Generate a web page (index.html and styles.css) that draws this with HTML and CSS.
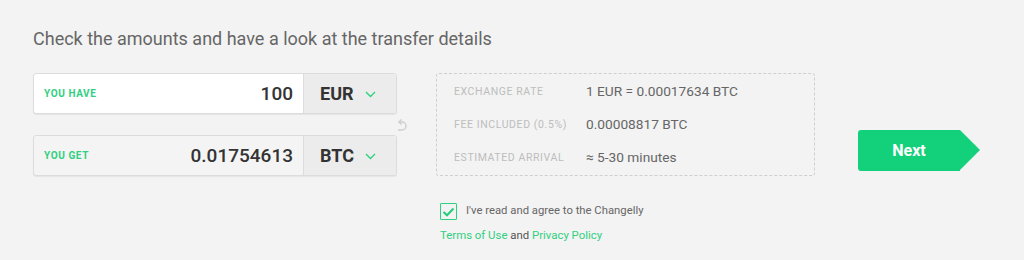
FILE: index.html
```html
<!DOCTYPE html>
<html>
<head>
<meta charset="utf-8">
<link rel="stylesheet" href="styles.css">
</head>
<body>
<div class="page">
  <h1 class="title">Check the amounts and have a look at the transfer details</h1>
  <div class="main">
    <div class="amounts">
      <div class="field field-have">
        <div class="field-body">
          <span class="field-label">YOU HAVE</span>
          <span class="field-value">100</span>
        </div>
        <div class="currency">
          <span class="currency-code">EUR</span>
          <svg class="chev" width="11" height="7" viewBox="0 0 11 7"><path d="M1 1 L5.5 5.5 L10 1" fill="none" stroke="#2fd07f" stroke-width="1.4"/></svg>
        </div>
      </div>
      <div class="swap-row">
        <svg class="swap" width="10" height="14" viewBox="0 0 10 14"><path d="M3 3 H5 A4 4 0 0 1 5 11 H1" fill="none" stroke="#cfcfcf" stroke-width="1.5"/><path d="M4.5 0.5 L2 3 L4.5 5.5" fill="none" stroke="#cfcfcf" stroke-width="1.5"/></svg>
      </div>
      <div class="field field-get">
        <div class="field-body">
          <span class="field-label">YOU GET</span>
          <span class="field-value">0.01754613</span>
        </div>
        <div class="currency">
          <span class="currency-code">BTC</span>
          <svg class="chev" width="11" height="7" viewBox="0 0 11 7"><path d="M1 1 L5.5 5.5 L10 1" fill="none" stroke="#2fd07f" stroke-width="1.4"/></svg>
        </div>
      </div>
    </div>
    <div class="details-col">
      <div class="details">
        <div class="row"><span class="d-label">EXCHANGE RATE</span><span class="d-value">1 EUR = 0.00017634 BTC</span></div>
        <div class="row"><span class="d-label">FEE INCLUDED (0.5%)</span><span class="d-value">0.00008817 BTC</span></div>
        <div class="row"><span class="d-label">ESTIMATED ARRIVAL</span><span class="d-value">≈ 5-30 minutes</span></div>
      </div>
      <div class="agree">
        <div class="agree-line">
          <span class="checkbox"><svg width="13" height="10" viewBox="0 0 13 10"><path d="M1.5 5 L5 8.3 L11.5 1.5" fill="none" stroke="#1fcf7b" stroke-width="2"/></svg></span>
          <span class="agree-text">I've read and agree to the Changelly</span>
        </div>
        <div class="links"><a class="link">Terms of Use</a> and <a class="link">Privacy Policy</a></div>
      </div>
    </div>
    <div class="next-wrap">
      <button class="next">Next</button>
    </div>
  </div>
</div>
</body>
</html>
```

FILE: styles.css
```css
html, body {
  margin: 0;
  padding: 0;
  background: #f3f3f3;
  font-family: Roboto, "Liberation Sans", sans-serif;
}
.page {
  padding: 28px 0 0 33px;
}
.title {
  margin: 0;
  font-size: 18px;
  line-height: 22px;
  font-weight: 400;
  color: #666;
}
.main {
  display: flex;
  margin-top: 23px;
  align-items: flex-start;
}
.amounts {
  width: 364px;
  display: flex;
  flex-direction: column;
}
.field {
  display: flex;
  height: 41px;
  box-sizing: border-box;
  border: 1px solid #dcdcdc;
  border-radius: 3px;
  overflow: hidden;
  box-shadow: 0 1px 1px rgba(0,0,0,0.06);
}
.field-have { background: #fff; }
.field-get { background: #f4f4f4; }
.field-body {
  flex: 1;
  display: flex;
  align-items: center;
  justify-content: space-between;
  padding: 0 10px 0 10px;
}
.field-label {
  font-size: 10px;
  font-weight: 700;
  letter-spacing: 0.6px;
  color: #2fd07f;
}
.field-value {
  font-size: 19px;
  font-weight: 500;
  color: #333;
}
.currency {
  width: 93px;
  box-sizing: border-box;
  border-left: 1px solid #dcdcdc;
  background: #ececec;
  display: flex;
  align-items: center;
  padding-left: 16px;
  gap: 11px;
}
.currency-code {
  font-size: 18px;
  font-weight: 700;
  color: #333;
}
.chev { margin-top: 1px; }
.swap-row {
  height: 21px;
  display: flex;
  justify-content: flex-end;
  align-items: center;
  margin-right: -10px;
}
.swap { display: block; margin-top: 2px; }
.details-col {
  margin-left: 39px;
  width: 379px;
}
.details {
  border: 1px dashed #cfcfcf;
  border-radius: 3px;
  padding: 0 17px 2px;
}
.row {
  height: 33px;
  display: flex;
  align-items: center;
}
.d-label {
  width: 132px;
  font-size: 10.5px;
  letter-spacing: 0.6px;
  color: #bdbdbd;
  padding-top: 2px;
}
.d-value {
  font-size: 13.7px;
  color: #666;
}
.agree {
  margin-top: 27px;
  padding-left: 4px;
}
.agree-line {
  display: flex;
  align-items: center;
  gap: 9px;
}
.checkbox {
  width: 17px;
  height: 17px;
  box-sizing: border-box;
  border: 1.5px solid #2fd07f;
  border-radius: 1px;
  display: flex;
  align-items: center;
  justify-content: center;
}
.agree-text {
  font-size: 11.3px;
  color: #666;
  margin-top: -3px;
}
.links {
  margin-top: 8px;
  font-size: 11.4px;
  color: #555;
}
.link {
  color: #2fd07f;
}
.next-wrap {
  margin-left: 43px;
  margin-top: 57px;
}
.next {
  position: relative;
  width: 102px;
  height: 41px;
  border: none;
  border-radius: 3px 0 0 3px;
  background: #13d07a;
  color: #fff;
  font-family: Roboto, "Liberation Sans", sans-serif;
  font-size: 16px;
  font-weight: 700;
  padding: 0;
  text-align: center;
}
.next::after {
  content: "";
  position: absolute;
  left: 102px;
  top: 0;
  border-left: 20px solid #13d07a;
  border-top: 20.5px solid transparent;
  border-bottom: 20.5px solid transparent;
}
```
